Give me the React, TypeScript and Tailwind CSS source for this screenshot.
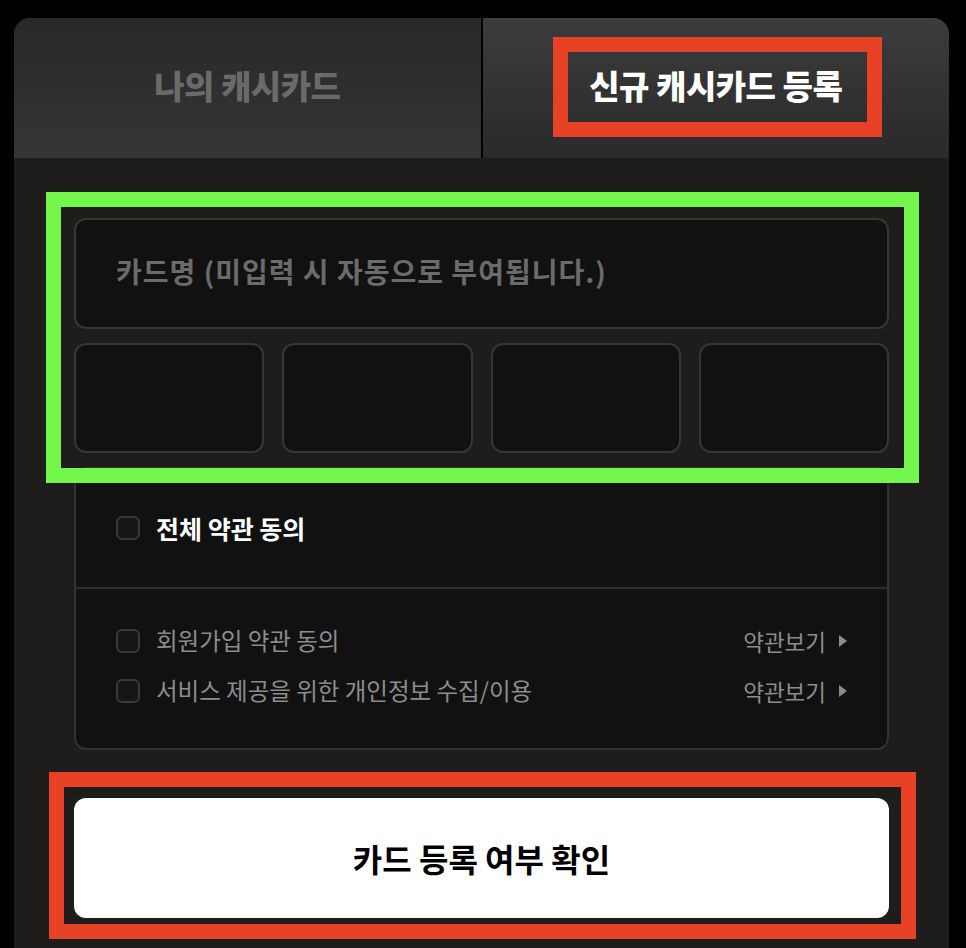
import { useState } from 'react';

const font = { fontFamily: '"Noto Sans CJK KR", "Noto Sans", sans-serif' };

function Check({ checked, onToggle }: { checked: boolean; onToggle: () => void }) {
  return (
    <button
      onClick={onToggle}
      className={`w-6 h-6 shrink-0 rounded-[6px] border-2 ${
        checked ? 'border-[#e84226] bg-[#e84226]' : 'border-[#393939] bg-[#161616]'
      }`}
    />
  );
}

function TermRow({ label, checked, onToggle }: { label: string; checked: boolean; onToggle: () => void }) {
  return (
    <div className="h-[50px] flex items-center justify-between">
      <div className="flex items-center gap-[16px]">
        <Check checked={checked} onToggle={onToggle} />
        <span className="text-[23.5px] text-[#8c8c8c] leading-none">{label}</span>
      </div>
      <button className="flex items-center gap-[13px] text-[22.5px] text-[#8c8c8c] leading-none">
        약관보기
        <svg width="8" height="12" viewBox="0 0 8 12">
          <polygon points="0,0 8,6 0,12" fill="#8c8c8c" />
        </svg>
      </button>
    </div>
  );
}

export default function App() {
  const [tab, setTab] = useState<'mine' | 'new'>('new');
  const [terms, setTerms] = useState([false, false]);
  const allChecked = terms.every(Boolean);

  return (
    <div className="min-h-screen bg-black pt-[18px] pl-[14px]" style={font}>
      <div className="relative w-[935px] rounded-t-[16px] overflow-hidden bg-[#1e1d1c] pb-[32px]">
        <div className="flex h-[140px]">
          <button
            onClick={() => setTab('mine')}
            className={`flex-1 flex items-center justify-center pb-[4px] bg-gradient-to-b from-[#282828] to-[#353535] text-[33px] font-black tracking-[-0.5px] ${
              tab === 'mine' ? 'text-white' : 'text-[#6a6a6a]'
            }`}
          >
            나의 캐시카드
          </button>
          <div className="w-[2px] bg-black" />
          <button
            onClick={() => setTab('new')}
            className={`flex-1 flex items-center justify-center pb-[4px] bg-gradient-to-b from-[#3c3c3c] to-[#2a2a2a] text-[33px] font-black tracking-[-0.5px] ${
              tab === 'new' ? 'text-white' : 'text-[#6a6a6a]'
            }`}
          >
            신규 캐시카드 등록
          </button>
        </div>

        <div className="px-[60px] pt-[60px] flex flex-col">
          <div className="h-[111px] rounded-[12px] border-2 border-[#363636] bg-[#111111] flex items-center pl-[40px] pb-[6px]">
            <input
              placeholder="카드명 (미입력 시 자동으로 부여됩니다.)"
              className="w-full bg-transparent outline-none text-[28px] tracking-[1px] font-bold text-white placeholder:text-[#6b6b6b]"
            />
          </div>

          <div className="mt-[14px] grid grid-cols-4 gap-[18px]">
            {[0, 1, 2, 3].map((i) => (
              <input
                key={i}
                maxLength={4}
                className="h-[110px] rounded-[12px] border-2 border-[#363636] bg-[#111111] outline-none text-center text-[26px] text-white"
              />
            ))}
          </div>

          <div className="mt-[14px] rounded-[12px] border-2 border-[#323232] bg-[#111111]">
            <div className="h-[118px] flex items-center gap-[16px] pl-[40px]">
              <Check checked={allChecked} onToggle={() => setTerms(allChecked ? [false, false] : [true, true])} />
              <span className="text-[25px] font-bold text-white leading-none">전체 약관 동의</span>
            </div>
            <div className="h-[2px] bg-[#2e2e2e]" />
            <div className="px-[40px] pt-[27px] pb-[32px]">
              <TermRow
                label="회원가입 약관 동의"
                checked={terms[0]}
                onToggle={() => setTerms([!terms[0], terms[1]])}
              />
              <TermRow
                label="서비스 제공을 위한 개인정보 수집/이용"
                checked={terms[1]}
                onToggle={() => setTerms([terms[0], !terms[1]])}
              />
            </div>
          </div>

          <button className="mt-[48px] h-[120px] rounded-[12px] bg-white text-black text-[32px] font-bold">
            카드 등록 여부 확인
          </button>
        </div>

        {/* annotation boxes */}
        <div className="absolute left-[539px] top-[19px] w-[329px] h-[100px] border-[15px] border-[#e84226] pointer-events-none" />
        <div className="absolute left-[32px] top-[174px] w-[873px] h-[291px] border-[15px] border-[#74f64c] pointer-events-none" />
        <div className="absolute left-[35px] top-[754px] w-[867px] h-[167px] border-[15px] border-[#e84226] pointer-events-none" />
      </div>
    </div>
  );
}
